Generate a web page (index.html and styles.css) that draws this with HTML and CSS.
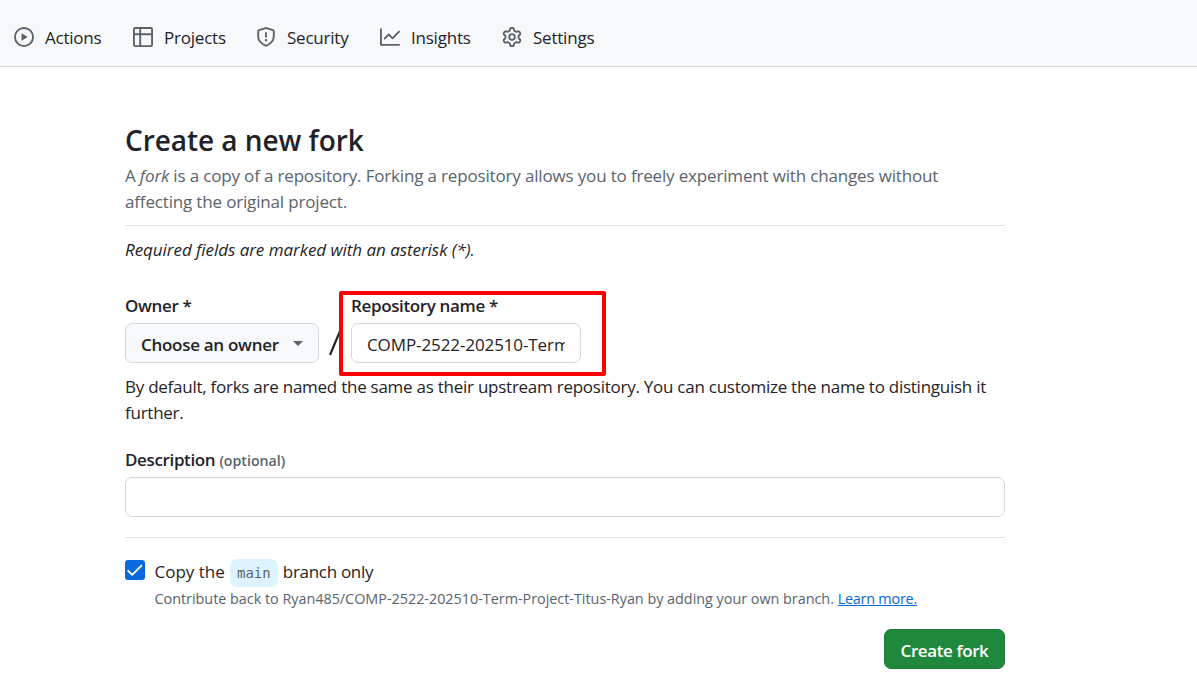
FILE: index.html
```html
<!DOCTYPE html>
<html lang="en">
<head>
<meta charset="utf-8">
<title>Create a new fork</title>
<link rel="stylesheet" href="styles.css">
</head>
<body>
<header class="nav">
  <a class="tab tab-actions"><svg class="icon" viewBox="0 0 16 16"><path d="M8 0a8 8 0 1 1 0 16A8 8 0 0 1 8 0ZM1.5 8a6.5 6.5 0 1 0 13 0 6.5 6.5 0 0 0-13 0Zm4.879-2.773 4.264 2.559a.25.25 0 0 1 0 .428l-4.264 2.559A.25.25 0 0 1 6 10.559V5.442a.25.25 0 0 1 .379-.215Z"/></svg><span>Actions</span></a>
  <a class="tab tab-projects"><svg class="icon" viewBox="0 0 16 16"><path d="M0 1.75C0 .784.784 0 1.75 0h12.5C15.216 0 16 .784 16 1.75v12.5A1.75 1.75 0 0 1 14.25 16H1.75A1.75 1.75 0 0 1 0 14.25ZM6.5 6.5v8h7.75a.25.25 0 0 0 .25-.25V6.5Zm8-1.5V1.75a.25.25 0 0 0-.25-.25H6.5V5Zm-13 1.5v7.75c0 .138.112.25.25.25H5v-8ZM5 5V1.5H1.75a.25.25 0 0 0-.25.25V5Z"/></svg><span>Projects</span></a>
  <a class="tab tab-security"><svg class="icon" viewBox="0 0 16 16"><path d="M7.467.133a1.748 1.748 0 0 1 1.066 0l5.25 1.68A1.75 1.75 0 0 1 15 3.48V7c0 1.566-.32 3.182-1.303 4.682-.983 1.498-2.585 2.813-5.032 3.855a1.697 1.697 0 0 1-1.33 0c-2.447-1.042-4.049-2.357-5.032-3.855C1.32 10.182 1 8.566 1 7V3.48a1.75 1.75 0 0 1 1.217-1.667Zm.61 1.429a.25.25 0 0 0-.153 0l-5.25 1.68a.25.25 0 0 0-.174.238V7c0 1.358.275 2.666 1.057 3.86.784 1.194 2.121 2.34 4.366 3.297a.196.196 0 0 0 .154 0c2.245-.956 3.582-2.104 4.366-3.298C13.225 9.666 13.5 8.36 13.5 7V3.48a.251.251 0 0 0-.174-.237l-5.25-1.68ZM8.75 4.75v3a.75.75 0 0 1-1.5 0v-3a.75.75 0 0 1 1.5 0ZM9 10.5a1 1 0 1 1-2 0 1 1 0 0 1 2 0Z"/></svg><span>Security</span></a>
  <a class="tab tab-insights"><svg class="icon" viewBox="0 0 16 16"><path d="M1.5 1.75V13.5h13.75a.75.75 0 0 1 0 1.5H.75a.75.75 0 0 1-.75-.75V1.75a.75.75 0 0 1 1.5 0Zm14.28 2.53-5.25 5.25a.75.75 0 0 1-1.06 0L7 7.06 4.28 9.78a.751.751 0 0 1-1.042-.018.751.751 0 0 1-.018-1.042l3.25-3.25a.75.75 0 0 1 1.06 0L10 7.94l4.72-4.72a.751.751 0 0 1 1.042.018.751.751 0 0 1 .018 1.042Z"/></svg><span>Insights</span></a>
  <a class="tab tab-settings"><svg class="icon" viewBox="0 0 16 16"><path d="M8 0a8.2 8.2 0 0 1 .701.031C9.444.095 9.99.645 10.16 1.29l.288 1.107c.018.066.079.158.212.224.231.114.454.243.668.386.123.082.233.09.299.071l1.103-.303c.644-.176 1.392.021 1.82.63.27.385.506.792.704 1.218.315.675.111 1.422-.364 1.891l-.814.806c-.049.048-.098.147-.088.294.016.257.016.515 0 .772-.01.147.038.246.088.294l.814.806c.475.469.679 1.216.364 1.891a7.977 7.977 0 0 1-.704 1.217c-.428.61-1.176.807-1.82.63l-1.102-.302c-.067-.019-.177-.011-.3.071a5.909 5.909 0 0 1-.668.386c-.133.066-.194.158-.211.224l-.29 1.106c-.168.646-.715 1.196-1.458 1.26a8.006 8.006 0 0 1-1.402 0c-.743-.064-1.289-.614-1.458-1.26l-.289-1.106c-.018-.066-.079-.158-.212-.224a5.738 5.738 0 0 1-.668-.386c-.123-.082-.233-.09-.299-.071l-1.103.303c-.644.176-1.392-.021-1.82-.63a8.12 8.12 0 0 1-.704-1.218c-.315-.675-.111-1.422.363-1.891l.815-.806c.05-.048.098-.147.088-.294a6.214 6.214 0 0 1 0-.772c.01-.147-.038-.246-.088-.294l-.815-.806C.635 6.045.431 5.298.746 4.623a7.92 7.92 0 0 1 .704-1.217c.428-.61 1.176-.807 1.82-.63l1.102.302c.067.019.177.011.3-.071.214-.143.437-.272.668-.386.133-.066.194-.158.211-.224l.29-1.106C6.009.645 6.556.095 7.299.03 7.53.01 7.764 0 8 0Zm-.571 1.525c-.036.003-.108.036-.137.146l-.289 1.105c-.147.561-.549.967-.998 1.189-.173.086-.34.183-.5.29-.417.278-.97.423-1.529.27l-1.103-.303c-.109-.03-.175.016-.195.045-.22.312-.412.644-.573.99-.014.031-.021.11.059.19l.815.806c.411.406.562.957.53 1.456a4.709 4.709 0 0 0 0 .582c.032.499-.119 1.05-.53 1.456l-.815.806c-.081.08-.073.159-.059.19.162.346.353.677.573.989.02.03.085.076.195.046l1.102-.303c.56-.153 1.113-.008 1.53.27.161.107.328.204.501.29.447.222.85.629.997 1.189l.289 1.105c.029.109.101.143.137.146a6.6 6.6 0 0 0 1.142 0c.036-.003.108-.036.137-.146l.289-1.105c.147-.561.549-.967.998-1.189.173-.086.34-.183.5-.29.417-.278.97-.423 1.529-.27l1.103.303c.109.029.175-.016.195-.045.22-.313.411-.644.573-.99.014-.031.021-.11-.059-.19l-.815-.806c-.411-.406-.562-.957-.53-1.456a4.709 4.709 0 0 0 0-.582c-.032-.499.119-1.05.53-1.456l.815-.806c.081-.08.073-.159.059-.19a6.464 6.464 0 0 0-.573-.989c-.02-.03-.085-.076-.195-.046l-1.102.303c-.56.153-1.113.008-1.53-.27a4.44 4.44 0 0 0-.501-.29c-.447-.222-.85-.629-.997-1.189l-.289-1.105c-.029-.11-.101-.143-.137-.146a6.6 6.6 0 0 0-1.142 0ZM11 8a3 3 0 1 1-6 0 3 3 0 0 1 6 0ZM9.5 8a1.5 1.5 0 1 0-3.001.001A1.5 1.5 0 0 0 9.5 8Z"/></svg><span>Settings</span></a>
</header>
<main class="page">
  <h1 class="title"><span>Create a new fork</span></h1>
  <p class="lead">A <em>fork</em> is a copy of a repository. Forking a repository allows you to freely experiment with changes without<br>affecting the original project.</p>
  <p class="required"><em>Required fields are marked with an asterisk (*).</em></p>
  <div class="fields">
    <div class="field owner">
      <label class="label">Owner *</label>
      <button class="select"><span class="select-text">Choose an owner</span><span class="caret"></span></button>
    </div>
    <svg class="slash" viewBox="0 0 12 26"><path d="M1 25 11 1"/></svg>
    <div class="field repo">
      <label class="label repo-label">Repository name *</label>
      <div class="input"><span class="input-text">COMP-2522-202510-Term</span></div>
      <div class="highlight"></div>
    </div>
  </div>
  <p class="hint">By default, forks are named the same as their upstream repository. You can customize the name to distinguish it<br>further.</p>
  <label class="label desc-label"><span class="desc">Description</span> <span class="optional">(optional)</span></label>
  <div class="input wide"></div>
  <div class="copy">
    <span class="check"><svg viewBox="0 0 20 20"><path d="m3.2 10.8 4 4L16.4 5.6"/></svg></span>
    <div class="copy-body">
      <div class="copy-title"><span class="copy-a">Copy the</span><code class="branch">main</code><span class="copy-b">branch only</span></div>
      <p class="note"><span class="note-text">Contribute back to Ryan485/COMP-2522-202510-Term-Project-Titus-Ryan by adding your own branch.</span> <a class="link">Learn more.</a></p>
    </div>
  </div>
  <div class="actions"><button class="submit"><span>Create fork</span></button></div>
</main>
</body>
</html>
```
FILE: styles.css
```css
* { box-sizing: border-box; }
body { margin: 0; background: #fff; color: #1f2328; font: 17px/26px "Open Sans", "Noto Sans", sans-serif; white-space: nowrap; }
p, h1 { margin: 0; }
button { font: inherit; color: inherit; letter-spacing: inherit; }
.nav { height: 67px; padding: 8px 0 0 14px; background: #f6f8fa; border-bottom: 1px solid #d1d9e0; display: flex; align-items: center; letter-spacing: -0.22px; }
.tab { display: flex; align-items: center; gap: 11px; height: 30px; }
.tab span { padding-top: 2px; }
.tab-actions { width: 119px; }
.tab-projects { width: 123px; }
.tab-security { width: 124px; }
.tab-insights { width: 122px; }
.icon { width: 20px; height: 20px; fill: #59636e; flex: none; }
.page { width: 880px; margin-left: 125px; padding-top: 54px; }
.title { font-size: 28px; line-height: 38px; font-weight: 600; letter-spacing: -0.05px; }
.lead { color: #59636e; padding: 4px 0 10px; border-bottom: 1px solid #dfe2e5; letter-spacing: -0.165px; }
.required { padding-top: 11px; letter-spacing: -0.05px; }
.fields { display: flex; margin-top: 30px; }
.field { display: flex; flex-direction: column; gap: 4px; }
.label { display: block; font-weight: 600; letter-spacing: -0.36px; }
.select { width: 194px; height: 40px; padding: 0 15px 0 15px; display: flex; align-items: center; justify-content: space-between; background: #f6f8fa; border: 1px solid #d1d9e0; border-radius: 7px; font-weight: 600; letter-spacing: -0.29px; }
.select-text { padding-top: 3px; }
.caret { border: 5px solid transparent; border-top-color: #59636e; border-bottom: 0; }
.slash { width: 12px; height: 26px; margin: 37px 10px 0; fill: none; stroke: #1f2328; stroke-width: 2.1; }
.repo { position: relative; width: 230px; }
.input { height: 40px; padding: 0 15px; border: 1px solid #d1d9e0; border-radius: 7px; display: flex; align-items: center; box-shadow: inset 0 1px 0 #1f23280a; }
.input-text { overflow: hidden; padding-top: 3px; letter-spacing: -0.1px; }
.highlight { position: absolute; left: -12px; top: -2px; width: 267px; height: 85px; border: 4px solid #fe0000; border-radius: 2px; }
.hint { padding-top: 11px; letter-spacing: -0.255px; }
.desc-label { margin: 21px 0 3px; }
.optional { font-size: 14.2px; letter-spacing: 0; color: #59636e; }
.copy { display: flex; gap: 9.5px; margin-top: 20px; padding-top: 20px; border-top: 1px solid #dfe2e5; }
.check { width: 20px; height: 20px; margin-top: 2px; background: #0969da; border-radius: 3px; }
.check svg { display: block; fill: none; stroke: #fff; stroke-width: 1.9; stroke-linecap: round; stroke-linejoin: round; }
.copy-title { display: flex; height: 28px; align-items: center; margin-top: 1px; }
.copy-a, .copy-b { margin-top: -2px; }
.copy-b { letter-spacing: -0.3px; }
.branch { width: 48px; height: 28px; margin: 0 5px; text-align: center; font: 14px/29px "DejaVu Sans Mono", monospace; color: #59636e; background: #ddf4ff; border-radius: 7px; }
.note { font-size: 14.4px; line-height: 24px; color: #59636e; letter-spacing: -0.02px; }
.link { color: #0969da; text-decoration: underline; letter-spacing: -0.22px; }
.actions { display: flex; justify-content: flex-end; padding-top: 18px; }
.submit { width: 121px; height: 40px; padding: 3px 0 0; color: #fff; background: #1f883d; border: 1px solid #1c7b38; border-radius: 7px; font-weight: 600; letter-spacing: -0.4px; }
```
